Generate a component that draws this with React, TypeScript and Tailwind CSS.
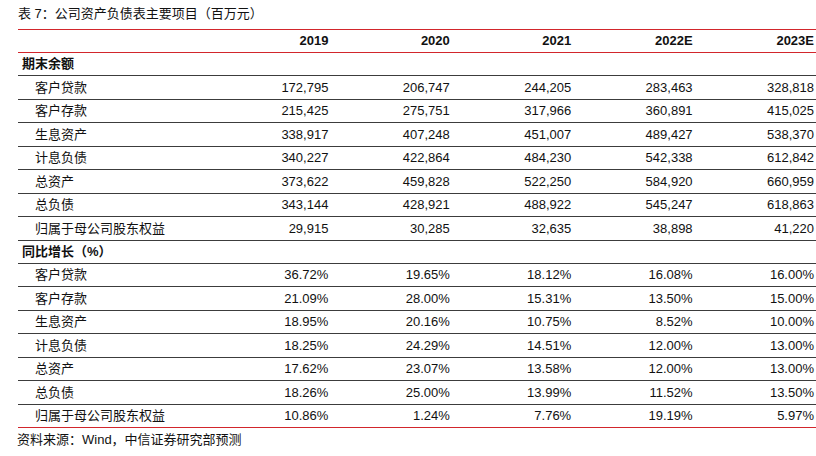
const years = ["2019", "2020", "2021", "2022E", "2023E"];

type Row = { label: string; values?: string[]; section?: boolean };

const rows: Row[] = [
  { label: "期末余额", section: true },
  { label: "客户贷款", values: ["172,795", "206,747", "244,205", "283,463", "328,818"] },
  { label: "客户存款", values: ["215,425", "275,751", "317,966", "360,891", "415,025"] },
  { label: "生息资产", values: ["338,917", "407,248", "451,007", "489,427", "538,370"] },
  { label: "计息负债", values: ["340,227", "422,864", "484,230", "542,338", "612,842"] },
  { label: "总资产", values: ["373,622", "459,828", "522,250", "584,920", "660,959"] },
  { label: "总负债", values: ["343,144", "428,921", "488,922", "545,247", "618,863"] },
  { label: "归属于母公司股东权益", values: ["29,915", "30,285", "32,635", "38,898", "41,220"] },
  { label: "同比增长（%）", section: true },
  { label: "客户贷款", values: ["36.72%", "19.65%", "18.12%", "16.08%", "16.00%"] },
  { label: "客户存款", values: ["21.09%", "28.00%", "15.31%", "13.50%", "15.00%"] },
  { label: "生息资产", values: ["18.95%", "20.16%", "10.75%", "8.52%", "10.00%"] },
  { label: "计息负债", values: ["18.25%", "24.29%", "14.51%", "12.00%", "13.00%"] },
  { label: "总资产", values: ["17.62%", "23.07%", "13.58%", "12.00%", "13.00%"] },
  { label: "总负债", values: ["18.26%", "25.00%", "13.99%", "11.52%", "13.50%"] },
  { label: "归属于母公司股东权益", values: ["10.86%", "1.24%", "7.76%", "19.19%", "5.97%"] },
];

export default function App() {
  return (
    <div
      className="h-[456px] w-[816px] overflow-hidden bg-white text-[13px] text-[#111]"
      style={{ fontFamily: '"Liberation Sans", "Noto Sans CJK SC", sans-serif' }}
    >
      {/* title */}
      <div className="flex h-[29px] items-center pl-[18px] pb-[1px]">表 7：公司资产负债表主要项目（百万元）</div>

      <div className="ml-[18px] border-t border-[#d2262c]">
        {/* header */}
        <div className="grid h-[23px] grid-cols-[191px_repeat(5,1fr)] items-center border-b border-[#d2262c] font-bold">
          <div />
          {years.map((y) => (
            <div key={y} className="pr-[2px] text-right">
              {y}
            </div>
          ))}
        </div>

        {rows.map((r, i) => {
          const last = i === rows.length - 1;
          return (
            <div
              key={i}
              className={
                "grid h-[23.44px] grid-cols-[191px_repeat(5,1fr)] items-center border-b " +
                (last ? "border-[#d2262c]" : "border-[#3c3c3c]")
              }
            >
              {r.section ? (
                <div className="pl-[4px] font-bold">{r.label}</div>
              ) : (
                <div className="pl-[17px]">{r.label}</div>
              )}
              {(r.values ?? ["", "", "", "", ""]).map((v, j) => (
                <div key={j} className="pr-[2px] text-right">
                  {v}
                </div>
              ))}
            </div>
          );
        })}
      </div>

      {/* source */}
      <div className="pl-[17px] pt-[2px]">资料来源：Wind，中信证券研究部预测</div>
    </div>
  );
}
